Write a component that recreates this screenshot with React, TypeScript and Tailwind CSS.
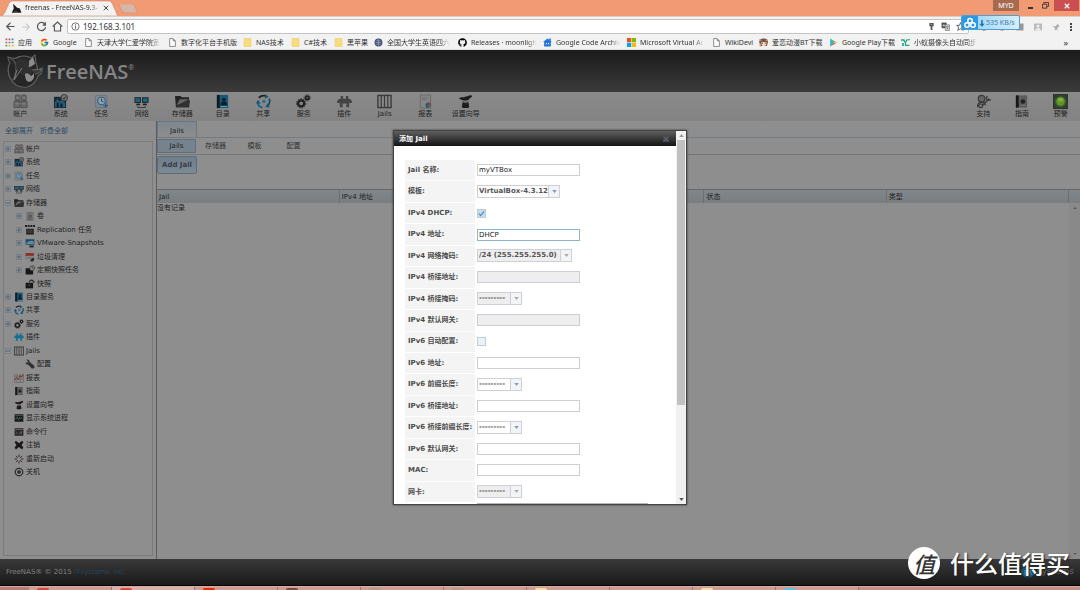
import React from "react";
import { FcGoogle } from "react-icons/fc";
import { FaGithub } from "react-icons/fa";

type IconName =
  | "users" | "system" | "tasks" | "network" | "storage" | "directory" | "sharing" | "services"
  | "plugins" | "jails" | "reports" | "wizard" | "support" | "guide" | "alert" | "volume"
  | "replication" | "vmware" | "scrub" | "periodic" | "snapshot" | "wrench" | "chart"
  | "process" | "shell" | "logout" | "reboot" | "shutdown";

const shapes: Record<IconName, React.ReactNode> = {
  users: (
    <g fill="#6a6a6a" stroke="#404040" strokeWidth=".7">
      <rect x="2.5" y="1" width="5" height="6" rx="1" />
      <rect x="9" y="1" width="5" height="6" rx="1" />
      <path d="M1 14.500V8.500q0-1 1.500-1h5v7zM8.500 14.500v-7h5q1.500 0 1.500 1v6z" />
      <path d="M2 10.500h12M3 4h4M10 4h3.500" stroke="#8d8d8d" />
    </g>
  ),
  system: (
    <g>
      <rect x="1" y="3" width="13" height="12" fill="#1c2a33" />
      <path d="M2 9l3-4 2 3 3-2 3 4v4H2z" fill="#1f5d7c" />
      <path d="M4 14V9h2v5M8 14v-4h2v4" fill="#0f1417" />
      <circle cx="12" cy="4" r="3.500" fill="#777" stroke="#333" />
      <path d="M10.500 4l1.200 1.500L14 2.500" fill="none" stroke="#222" />
    </g>
  ),
  tasks: (
    <g>
      <rect x="1.500" y="1.500" width="12" height="13" rx="1" fill="#7d868e" stroke="#69747e" />
      <circle cx="8" cy="7.500" r="4" fill="#8fa0ad" stroke="#346484" strokeWidth="1.200" />
      <path d="M8 5V7.500l2 1" fill="none" stroke="#334" />
      <path d="M12.500 10v5M10 12.500h5" stroke="#265f89" strokeWidth="1.300" />
    </g>
  ),
  network: (
    <g>
      <rect x="1" y="4" width="6" height="5" fill="#1b6284" stroke="#222" />
      <rect x="9" y="4" width="6" height="5" fill="#1b6284" stroke="#222" />
      <path d="M2 12h5l-1-2H3zM9 12h5l-1-2h-3z" fill="#222" />
      <path d="M4 13v1.500h8V13" fill="none" stroke="#333" />
    </g>
  ),
  storage: (
    <g>
      <path d="M0 2h6l1 1.500h8V14H1z" fill="#242424" />
      <path d="M3 7h13l-1 7H1z" fill="#303030" />
      <path d="M2 12L15 5.500H5z" fill="#666" />
    </g>
  ),
  directory: (
    <g>
      <rect x="2" y="1" width="12" height="14" fill="#155a75" />
      <rect x="2" y="1" width="3" height="14" fill="#101820" />
      <circle cx="9.500" cy="6" r="2" fill="#0c1c26" />
      <path d="M6 12q0-4 3.500-4T13 12z" fill="#0c1c26" />
      <path d="M6 13.500h7" stroke="#75a0b4" />
    </g>
  ),
  sharing: (
    <g fill="none" strokeWidth="2">
      <path d="M3 4q3-3 7-2" stroke="#222" />
      <path d="M14 5q2 4-2 8" stroke="#174e6c" />
      <path d="M7 14.500Q2 13.500 2 9" stroke="#1c6188" />
      <circle cx="8.500" cy="8" r="2.300" fill="#356882" stroke="#84919a" strokeWidth=".8" />
      <path d="M9.500 0l4 3-4 2zM15 14l-5 0 2-4zM0 10l2-4 3 4z" fill="#1c536f" stroke="none" />
    </g>
  ),
  services: (
    <g fill="none" stroke="#202020">
      <circle cx="5.500" cy="10" r="3.200" strokeWidth="2.500" />
      <circle cx="5.500" cy="10" r="4.900" strokeWidth="1" strokeDasharray="1.500 1.200" />
      <circle cx="12" cy="4" r="1.800" strokeWidth="2" />
      <circle cx="12" cy="4" r="3.300" strokeWidth=".8" strokeDasharray="1 1" />
    </g>
  ),
  plugins: <path d="M4 2h2.500v3h3V2H12v3h1q3 1 3 4.500h-3V14h-3v-4H6v4H3V9.500H0Q0 6 3 5h1z" fill="currentColor" />,
  jails: (
    <g fill="none" stroke="#3a3a3a">
      <rect x="1" y="1.500" width="14" height="13" strokeWidth="1.500" />
      <path d="M4.500 2v12M8 2v12M11.500 2v12" strokeWidth="1.300" />
    </g>
  ),
  reports: (
    <g>
      <rect x="2.500" y="1" width="11" height="14" fill="#858585" stroke="#6c6c6c" />
      <path d="M4.500 4h6M4.500 6h5" stroke="#707070" />
      <circle cx="11" cy="12" r="3" fill="#2d5581" />
      <path d="M11 12V9a3 3 0 0 1 3 3z" fill="#9b3d32" />
      <path d="M11 12h3a3 3 0 0 1-3 3z" fill="#468044" />
    </g>
  ),
  wizard: (
    <g fill="#1d1d1d">
      <path d="M1 4.500q2-1.500 5-1L14 1l1 2-3 2q0 1.500-3 2-6 0-8-2.500z" />
      <path d="M5 8q3 1 6 0l1 6q-4 2-8 0z" />
      <path d="M5 8.500q3 1.500 6 0" stroke="#6e6e6e" fill="none" />
    </g>
  ),
  support: (
    <g fill="none" stroke="#3b3b3b" strokeWidth="1.400">
      <circle cx="6" cy="5" r="3.500" fill="#666" />
      <path d="M2 14q-1-5 4-5 4 0 4 3M7 12l7-7M12 2l-1 3 2 2 3-1" />
      <circle cx="5" cy="12.500" r="2" />
    </g>
  ),
  guide: (
    <g>
      <rect x="2" y="1.500" width="12" height="13" fill="#5c5c5c" />
      <rect x="2" y="1.500" width="3" height="13" fill="#161616" />
      <circle cx="9.500" cy="8" r="2.500" fill="#222" />
      <path d="M7 12h5" stroke="#777" />
    </g>
  ),
  alert: (
    <g>
      <rect x=".5" y=".5" width="15" height="15" fill="#363b34" stroke="#29342a" />
      <circle cx="8" cy="8" r="6" fill="#38602a" />
      <circle cx="8" cy="8" r="4.500" fill="#609524" />
      <ellipse cx="8" cy="6" rx="3" ry="2" fill="#83ac44" />
    </g>
  ),
  volume: (
    <g fill="#7c7c7c" stroke="#666">
      <rect x="3" y="2" width="10" height="13" />
      <path d="M6 6v5M8 3v9M10 6v5M4 13h8" stroke="#3c3c3c" />
    </g>
  ),
  replication: (
    <g fill="#1b1b1b">
      <path d="M0 0h3v3H0zM4.300 0h3v3h-3zM8.700 0h3v3h-3zM13 0h3v3h-3zM2 6h12v9H2z" />
      <path d="M5 7v6M8 7v6M11 7v6" stroke="#777" />
    </g>
  ),
  vmware: (
    <g>
      <rect x="1" y="2" width="14" height="9" fill="#164a70" />
      <path d="M2 8q5-5 12-3v5H2z" fill="#698599" />
      <path d="M7 12h7v3H7z" fill="#252525" />
    </g>
  ),
  scrub: (
    <g>
      <rect x="1" y="2" width="13" height="9" fill="#858585" stroke="#777" />
      <rect x="1" y="2" width="13" height="4" fill="#912520" />
      <path d="M4 9h6" stroke="#666" />
      <path d="M9 12l4-3 2 2-2 4H9z" fill="#262626" />
    </g>
  ),
  periodic: (
    <g>
      <path d="M1 5h7v3h5v7H1z" fill="#181818" />
      <circle cx="11.500" cy="5" r="4" fill="#8e8e8e" stroke="#333" />
      <path d="M11.500 2.500V5h2" fill="none" stroke="#222" />
    </g>
  ),
  snapshot: (
    <g fill="#181818">
      <path d="M1 6h12v9H1z" />
      <path d="M7 5q2-5 6-2l2 3" fill="none" stroke="#222" strokeWidth="2" />
      <circle cx="7" cy="10" r="1.500" fill="#444" />
    </g>
  ),
  wrench: <path d="M2 1l3 3-1 2-3-1q0 4 4 4l6 6q3 1 4-1t-1-4L8 5Q7 0 2 1z" fill="#333" />,
  chart: (
    <g fill="none">
      <path d="M1 1v14h14V1M1 5h14M1 10h14M5 1v14M10 1v14" stroke="#555" strokeWidth=".8" />
      <path d="M1 11l3-4 3 3 3-6 2 3 3-5" stroke="#8e211d" strokeWidth="1.400" />
    </g>
  ),
  process: (
    <g>
      <rect x="1" y="2" width="14" height="12" fill="#181818" />
      <path d="M2 9h2l1-3 2 5 2-4 1 3 2-3 1 2" fill="none" stroke="#507073" />
      <path d="M2 4h12" stroke="#666" />
    </g>
  ),
  shell: (
    <g>
      <rect x="1" y="2" width="14" height="12" fill="#282424" />
      <path d="M3 7l2 2-2 2M7 11h2M10 7v4M12 7v4M2 4h12" fill="none" stroke="#888" />
    </g>
  ),
  logout: <path d="M3 1l5 4 5-4 2 3-3 4 3 4-2 3-5-4-5 4-2-3 3-4-3-4z" fill="#1c1717" />,
  reboot: (
    <path
      d="M8 1v4M8 11v4M1 8h4M11 8h4M3 3l3 3M10 10l3 3M13 3l-3 3M6 10l-3 3"
      stroke="#242424"
      strokeWidth="1.500"
    />
  ),
  shutdown: (
    <g fill="none" stroke="#2c2c2c">
      <circle cx="8" cy="8" r="6" strokeWidth="2" />
      <circle cx="8" cy="8" r="2.500" fill="#333" />
    </g>
  ),
};

function Icon({ name, className }: { name: IconName; className: string }) {
  return (
    <svg viewBox="0 0 16 16" className={className} aria-hidden="true">
      {shapes[name]}
    </svg>
  );
}

const navItems: [IconName, string][] = [
  ["users", "帐户"], ["system", "系统"], ["tasks", "任务"], ["network", "网络"],
  ["storage", "存储器"], ["directory", "目录"], ["sharing", "共享"], ["services", "服务"],
  ["plugins", "插件"], ["jails", "Jails"], ["reports", "报表"], ["wizard", "设置向导"],
];

const navRight: [IconName, string][] = [
  ["support", "支持"], ["guide", "指南"], ["alert", "预警"],
];

interface TreeRow {
  icon: IconName;
  label: string;
  sign?: "+" | "-";
  child?: boolean;
}

const tree: TreeRow[] = [
  { icon: "users", label: "帐户", sign: "+" },
  { icon: "system", label: "系统", sign: "+" },
  { icon: "tasks", label: "任务", sign: "+" },
  { icon: "network", label: "网络", sign: "+" },
  { icon: "storage", label: "存储器", sign: "-" },
  { icon: "volume", label: "卷", sign: "+", child: true },
  { icon: "replication", label: "Replication 任务", sign: "+", child: true },
  { icon: "vmware", label: "VMware-Snapshots", sign: "+", child: true },
  { icon: "scrub", label: "垃圾清理", sign: "+", child: true },
  { icon: "periodic", label: "定期快照任务", sign: "+", child: true },
  { icon: "snapshot", label: "快照", child: true },
  { icon: "directory", label: "目录服务", sign: "+" },
  { icon: "sharing", label: "共享", sign: "+" },
  { icon: "services", label: "服务", sign: "+" },
  { icon: "plugins", label: "插件" },
  { icon: "jails", label: "Jails", sign: "-" },
  { icon: "wrench", label: "配置", child: true },
  { icon: "chart", label: "报表" },
  { icon: "guide", label: "指南" },
  { icon: "wizard", label: "设置向导" },
  { icon: "process", label: "显示系统进程" },
  { icon: "shell", label: "命令行" },
  { icon: "logout", label: "注销" },
  { icon: "reboot", label: "重新启动" },
  { icon: "shutdown", label: "关机" },
];

const marks = {
  apps: (
    <g>
      <path d="M1 1h3v3H1zM6.500 1h3v3h-3zM1 6.500h3v3H1z" fill="#e04a3d" />
      <path d="M12 1h3v3h-3zM6.500 6.500h3v3h-3z" fill="#3c7de0" />
      <path d="M12 6.500h3v3h-3zM1 12h3v3H1z" fill="#35a853" />
      <path d="M6.500 12h3v3h-3zM12 12h3v3h-3z" fill="#f0b72c" />
    </g>
  ),
  page: <path d="M3 1h6l4 4v10H3zM9 1v4h4" fill="#fff" stroke="#666" strokeWidth="1.300" />,
  folder: <path d="M2 1h12v14H2z" fill="#f9dc7c" stroke="#ecc95c" />,
  seal: (
    <g>
      <circle cx="8" cy="8" r="7" fill="#445277" />
      <path d="M4 5h8M3 8h10M4 11h8M8 2v12" stroke="#aab4cf" />
    </g>
  ),
  code: (
    <g>
      <path d="M8 1l8 6h-2v8H2V7H0z" fill="#2077d8" />
      <path d="M5 9h2v2H5zM9 9h2v2H9z" fill="#dcecff" />
      <path d="M11 1h3v4h-3z" fill="#2077d8" />
    </g>
  ),
  ms: (
    <g>
      <path d="M0 0h7.500v7.500H0z" fill="#f25022" />
      <path d="M8.500 0H16v7.500H8.500z" fill="#7fba00" />
      <path d="M0 8.500h7.500V16H0z" fill="#00a4ef" />
      <path d="M8.500 8.500H16V16H8.500z" fill="#ffb900" />
    </g>
  ),
  anime: (
    <g>
      <path d="M0 6Q2 0 8 1q7-1 8 6l-2 7H3z" fill="#7a5546" />
      <path d="M4 7h9v5q-4 4-8 1z" fill="#f6dcc8" />
      <path d="M1 2l3 3M15 3l-3 2" stroke="#c99b82" strokeWidth="2" />
      <circle cx="6" cy="9" r="1" fill="#422" />
      <circle cx="11" cy="9" r="1" fill="#422" />
      <path d="M1 10h3v5H1z" fill="#d88b6d" />
    </g>
  ),
  play: (
    <g>
      <path d="M2 1v14l7-7z" fill="#27b9d6" />
      <path d="M2 1l9 5-2 2z" fill="#39b86a" />
      <path d="M11 6l4 2-4 2-2-2z" fill="#f6c343" />
      <path d="M2 15l9-5-2-2z" fill="#e44d55" />
    </g>
  ),
  ant: <path d="M0 2h6l2 4 2-4h6v2h-4L9 8v4h6v2H7V9L4 5H0zM2 9h3v5H2z" fill="#20a884" />,
};

type Mark = keyof typeof marks | "google" | "github";

interface Bookmark {
  mark: Mark;
  label: string;
  width: string;
  faded?: boolean;
}

const bookmarks: Bookmark[] = [
  { mark: "apps", label: "应用", width: "w-[35px]" },
  { mark: "google", label: "Google", width: "w-[44px]" },
  { mark: "page", label: "天津大学仁爱学院宽", width: "w-[84px]", faded: true },
  { mark: "page", label: "数字化平台手机版", width: "w-[75px]" },
  { mark: "folder", label: "NAS技术", width: "w-12" },
  { mark: "folder", label: "C#技术", width: "w-[43px]" },
  { mark: "folder", label: "黑苹果", width: "w-10" },
  { mark: "seal", label: "全国大学生英语四六", width: "w-[84px]", faded: true },
  { mark: "github", label: "Releases · moonligh", width: "w-[85px]", faded: true },
  { mark: "code", label: "Google Code Archiv", width: "w-[84px]", faded: true },
  { mark: "ms", label: "Microsoft Virtual Ac", width: "w-[85px]", faded: true },
  { mark: "page", label: "WikiDevi", width: "w-[47px]" },
  { mark: "anime", label: "爱恋动漫BT下载", width: "w-[70px]" },
  { mark: "play", label: "Google Play下载", width: "w-[72px]" },
  { mark: "ant", label: "小蚁摄像头自动同步", width: "w-20", faded: true },
];

function BookmarkIcon({ mark }: { mark: Mark }) {
  if (mark === "google") return <FcGoogle className="size-[9px] shrink-0" />;
  if (mark === "github") return <FaGithub className="size-[9px] shrink-0 text-black" />;
  return (
    <svg viewBox="0 0 16 16" className="size-[9px] shrink-0" aria-hidden="true">
      {marks[mark]}
    </svg>
  );
}

const FADE = "[mask-image:linear-gradient(to_right,black_85%,transparent)]";

function Browser() {
  return (
    <div className="relative font-[family-name:'Noto_Sans','Noto_Sans_CJK_SC',sans-serif] text-[7px] text-[#333]">
      <div className="flex h-4 items-start justify-between bg-[#f29a73]">
        <div className="flex items-start">
          <div className="relative h-4 w-[118px]">
            <svg viewBox="0 0 118 16" className="absolute inset-0 h-4 w-[118px]" aria-hidden="true">
              <path d="M1 16q3-1 4-4L9 3q1-2 3-2h97q2 0 3 2l4 9q1 3 2 4z" fill="#f4f3f2" stroke="#c98465" strokeWidth=".6" />
            </svg>
            <div className="relative flex h-4 items-center pl-[11px]">
              <svg viewBox="0 0 16 16" className="size-[11px]" aria-hidden="true">
                <path d="M3 1l6 6 4 1 2 6H1l3-6z" fill="#1c1c1c" />
                <path d="M4 14q3-3 6 0" stroke="#777" fill="none" />
              </svg>
              <span className={`ml-[3px] w-[76px] overflow-hidden whitespace-nowrap ${FADE}`}>freenas - FreeNAS-9.3-</span>
              <button aria-label="Close tab" className="ml-[2px]">
                <svg viewBox="0 0 8 8" className="size-[6px]"><path d="M1 1l6 6M7 1L1 7" stroke="#444" strokeWidth="1.300" /></svg>
              </button>
            </div>
          </div>
          <button aria-label="New tab" className="mt-1">
            <svg viewBox="0 0 20 10" className="h-[10px] w-5"><path d="M1 1q0-1 1-1h12q2 0 3 2l2 6q0 1-1 1H7Q5 9 4 7z" fill="#d9b5a4" stroke="#c88a6d" strokeWidth=".5" /></svg>
          </button>
        </div>
        <div className="flex h-[11px] items-stretch">
          <button className="w-[26px] bg-[#a56a50] leading-[11px] text-white">MYD</button>
          <button aria-label="Minimize" className="flex w-[23px] items-center justify-center pt-1">
            <span className="h-[2px] w-[5px] bg-[#333]" />
          </button>
          <button aria-label="Restore" className="flex w-3 items-center">
            <svg viewBox="0 0 8 8" className="size-[7px]"><path d="M2 2V.5h5.500V5H6M.5 2.500h5V7h-5z" fill="none" stroke="#333" /></svg>
          </button>
          <button aria-label="Close" className="mr-px flex w-[25px] items-center justify-center bg-[#c94f50]">
            <svg viewBox="0 0 8 8" className="size-[6px]"><path d="M1 1l6 6M7 1L1 7" stroke="#fff" strokeWidth="1.500" /></svg>
          </button>
        </div>
      </div>

      <div className="flex h-5 items-center border-t border-[#d8d0cb] bg-[#f2f2f2] pl-[5px]">
        <div className="flex w-[62px] items-center gap-[5px]">
          <button aria-label="Back"><svg viewBox="0 0 16 16" className="size-[11px]"><path d="M14 8H3M8 2.500L2.500 8 8 13.500" fill="none" stroke="#555" strokeWidth="1.700" /></svg></button>
          <button aria-label="Forward"><svg viewBox="0 0 16 16" className="size-[10px]"><path d="M2 8h11M8 2.500L13.500 8 8 13.500" fill="none" stroke="#c8c8c8" strokeWidth="1.700" /></svg></button>
          <button aria-label="Reload"><svg viewBox="0 0 16 16" className="size-[11px]"><path d="M13 4.500A6 6 0 1 0 14 9" fill="none" stroke="#555" strokeWidth="1.800" /><path d="M14.500 1v6H9z" fill="#555" /></svg></button>
          <button aria-label="Home"><svg viewBox="0 0 16 16" className="size-[11px]"><path d="M1 8l7-6.500L15 8M3.500 7v7.500h9V7" fill="none" stroke="#555" strokeWidth="1.600" /></svg></button>
        </div>
        <div className="flex h-[15px] flex-1 items-center rounded-xs border border-[#c4c4c4] bg-white pl-[3px]">
          <svg viewBox="0 0 16 16" className="size-[9px]" aria-hidden="true">
            <circle cx="8" cy="8" r="6.500" fill="none" stroke="#555" strokeWidth="1.400" />
            <path d="M8 7v5M8 4v2" stroke="#555" strokeWidth="1.600" />
          </svg>
          <input aria-label="Address" defaultValue="192.168.3.101" className="ml-[3px] min-w-0 flex-1 text-[8px] leading-3 outline-none" />
          <svg viewBox="0 0 16 16" className="size-[7px]" aria-hidden="true"><path d="M3 0h10v7l-3 1v8H6V8L3 7z" fill="#555" /><path d="M6 3h4" stroke="#fff" /></svg>
          <svg viewBox="0 0 16 16" className="mx-[6px] size-[9px]" aria-hidden="true">
            <path d="M1 1h9v10H1z" fill="#555" /><path d="M7 5h8v10H8z" fill="#ddd" stroke="#555" />
            <path d="M3 6h4M5 4v4" stroke="#fff" /><path d="M9 8h4l-3 5M10 10l3 3" fill="none" stroke="#555" />
          </svg>
          <svg viewBox="0 0 16 16" className="mr-[3px] size-[9px]" aria-hidden="true"><path d="M8 1l2 5h5l-4 3 2 6-5-3-5 3 2-6-4-3h5z" fill="none" stroke="#444" strokeWidth="1.400" /></svg>
        </div>
        <div className="flex w-[111px] items-center justify-end gap-[10px] pr-2">
          <svg viewBox="0 0 16 16" className="size-2" aria-hidden="true"><circle cx="8" cy="8" r="7" fill="#444" /></svg>
          <svg viewBox="0 0 16 16" className="size-2" aria-hidden="true"><circle cx="8" cy="8" r="7" fill="#d8382d" /></svg>
          <svg viewBox="0 0 16 16" className="size-2" aria-hidden="true"><path d="M1 1h14v14H1z" fill="#999" /></svg>
          <svg viewBox="0 0 16 16" className="size-2" aria-hidden="true"><path d="M0 1h16v14H0z" fill="#bbb" /><circle cx="8" cy="6" r="3" fill="#eee" /><path d="M2 15q1-5 6-5t6 5z" fill="#eee" /></svg>
          <svg viewBox="0 0 16 16" className="size-2" aria-hidden="true"><path d="M1 6l6 1 5-6 1 4 3 1-5 3-1 3 2 3-4-2-3 2 1-5z" fill="#aaa" /></svg>
          <button aria-label="Menu"><svg viewBox="0 0 4 16" className="h-2 w-[2px]"><path d="M0 0h4v4H0zM0 6h4v4H0zM0 12h4v4H0z" fill="#444" /></svg></button>
        </div>
      </div>

      <nav className="flex h-[14px] items-center border-b border-[#ddd] bg-[#f2f2f2] pl-[5px]">
        {bookmarks.map(({ mark, label, width, faded }) => (
          <a key={label} href="#" className={`flex shrink-0 items-center gap-1 pr-1 ${width}`}>
            <BookmarkIcon mark={mark} />
            <span className={`leading-[13px] whitespace-nowrap ${faded ? FADE : ""}`}>{label}</span>
          </a>
        ))}
        <button aria-label="More bookmarks" className="mr-3 ml-auto text-[9px] leading-3">»</button>
      </nav>

      {/* download speed widget floating over the toolbar */}
      <div className="absolute top-[15px] right-[60px] flex h-[15px] w-[59px] items-stretch overflow-hidden rounded-xs border border-[#4d9fd2] bg-linear-to-r from-[#8fcff8] to-[#d7eefb]">
        <div className="flex w-4 items-center justify-center bg-[#2b9ae6]">
          <svg viewBox="0 0 16 16" className="size-3" aria-hidden="true">
            <g fill="none" stroke="#fff" strokeWidth="2">
              <circle cx="8" cy="5" r="3" /><circle cx="4" cy="10.500" r="3" /><circle cx="12" cy="10.500" r="3" />
            </g>
          </svg>
        </div>
        <svg viewBox="0 0 8 16" className="ml-px h-3 w-[6px] self-center" aria-hidden="true"><path d="M3 4h2v5h2.500L4 13 .5 9H3z" fill="#1c6db4" /></svg>
        <span className="ml-px text-[7px] leading-[13px] text-[#4480ac]">535 KB/s</span>
      </div>
    </div>
  );
}

function Header() {
  return (
    <header className="flex h-[42px] items-center bg-linear-to-b from-[#1b1b1b] to-[#3b3b3b] pl-[6px]">
      <svg viewBox="0 0 38 36" className="h-9 w-[38px]" aria-hidden="true">
        <circle cx="17" cy="18" r="14.500" fill="#272727" stroke="#666" strokeWidth="1.300" />
        <path d="M2 4q5 2 9 1 7-4 14 0l4-3 1 8q2 4 1 8l5-3q1 5-4 8-3 9-11 11-6 1-11-2-5-4-7-10Q1 14 4 10 2 7 2 4z" fill="#262626" stroke="#5c5c5c" strokeWidth="1.200" />
        <path d="M4 5q7 3 6 12-1 9-5 12" fill="none" stroke="#4d4d4d" strokeWidth="1.500" />
        <path d="M10 8q8-5 13 2 5 5 3 10-4 6-9 2-8-3-7-14z" fill="#303030" />
        <path d="M23 8l4-4 2 7-5 3q-2 0-1-2zM19 21q3-2 6 2 2-1 3-3 1 8-5 9-4-1-4-8z" fill="#8c8c8c" />
        <path d="M16 15l-8 12 3-10" fill="none" stroke="#7a7a7a" />
        <path d="M26 17l9-1q-1 5-6 5" fill="#3c3c3c" stroke="#666" />
      </svg>
      <h1 className="ml-[2px] flex items-start pt-[2px] font-[family-name:'Open_Sans',sans-serif] text-[20px] leading-6 font-semibold text-[#858585]">
        FreeNAS<sup className="top-0 mt-1 text-[7px] leading-[7px]">®</sup>
      </h1>
    </header>
  );
}

function NavButton({ icon, label }: { icon: IconName; label: string }) {
  return (
    <button className="flex flex-col items-center gap-px pt-[2px] whitespace-nowrap">
      <Icon name={icon} className="size-[15px] text-[#444]" />
      <span className="leading-[9px]">{label}</span>
    </button>
  );
}

function Sidebar() {
  return (
    <aside className="flex w-[156px] shrink-0 flex-col px-[3px] pb-[3px]">
      <div className="flex h-5 items-center gap-[7px] pl-[2px] text-[#2d4a66]">
        <a href="#">全部展开</a>
        <a href="#">折叠全部</a>
      </div>
      <div className="flex-1 border border-[#7b7b7b]">
        <ul className="grid h-[337px] auto-rows-fr">
          {tree.map((row, i) => (
            <li key={i} className={`flex items-center ${row.child ? "pl-3" : "pl-px"}`}>
              {row.sign ? (
                <button
                  aria-label={row.sign === "+" ? "展开" : "折叠"}
                  className="flex size-[6px] items-center justify-center border border-[#767e8a] bg-[#949494]"
                >
                  <svg viewBox="0 0 4 4" className="size-1">
                    <path d={row.sign === "+" ? "M0 2h4M2 0v4" : "M0 2h4"} stroke="#56606e" />
                  </svg>
                </button>
              ) : (
                <span className="w-[6px]" />
              )}
              <Icon
                name={row.icon}
                className={`mr-[2px] ml-[3px] size-[10px] ${row.icon === "plugins" ? "text-[#147192]" : "text-[#333]"}`}
              />
              <a href="#" className="leading-3 whitespace-nowrap">{row.label}</a>
            </li>
          ))}
        </ul>
      </div>
    </aside>
  );
}

function Arrow({ up, className }: { up?: boolean; className: string }) {
  return (
    <svg viewBox="0 0 6 4" className={className} aria-hidden="true">
      <path d={up ? "M0 4l3-4 3 4z" : "M0 0l3 4 3-4z"} fill="currentColor" />
    </svg>
  );
}

function JailsPanel() {
  return (
    <main className="flex min-w-0 flex-1 flex-col border-l border-[#5c5c5c]">
      <div className="flex h-[17px] border-b border-[#737b83]">
        <button className="w-10 border-x border-t border-[#6c7681] bg-linear-to-b from-[#7f878f] to-[#8e8e8e] pt-[3px] leading-3">Jails</button>
      </div>
      <div className="flex h-[17px] items-center border-b border-[#777] text-[#333]">
        <button className="h-[14px] w-[39px] border border-[#5f7080] bg-[#76828d] leading-3 text-[#222]">Jails</button>
        <button className="w-[39px] leading-3">存储器</button>
        <button className="w-[39px] leading-3">模板</button>
        <button className="w-[39px] leading-3">配置</button>
      </div>
      <div className="h-[34px] pt-px">
        <button className="h-[18px] w-10 rounded-xs border border-[#5a6d7f] bg-linear-to-b from-[#6f7e8c] to-[#7d8993] leading-4 font-bold whitespace-nowrap text-[#363e46]">Add Jail</button>
      </div>
      <div className="flex flex-1 flex-col border-t border-[#666]">
        <div className="flex h-[13px] bg-linear-to-b from-[#80868a] to-[#787e82]">
          <table className="w-full table-fixed text-left">
            <thead>
              <tr className="h-[13px] leading-3">
                {["Jail", "IPv4 地址", "", "状态", "类型"].map((title, i) => (
                  <th key={i} className="border-r border-[#6b7074] pl-[2px] font-normal">{title}</th>
                ))}
              </tr>
            </thead>
          </table>
          <div className="w-[11px] shrink-0" />
        </div>
        <div className="flex flex-1">
          <p className="flex-1 leading-[10px]">没有记录</p>
          <div className="flex w-[11px] flex-col items-center justify-between bg-[#898989] py-1 text-[#555]">
            <Arrow up className="h-[2px] w-1" />
            <Arrow className="h-[2px] w-1" />
          </div>
        </div>
      </div>
    </main>
  );
}

interface Field {
  id: string;
  label: string;
  kind: "text" | "select" | "check";
  value?: string;
  width?: string;
  disabled?: boolean;
  checked?: boolean;
  focused?: boolean;
}

const DASHES = "---------";

const fields: Field[] = [
  { id: "name", label: "Jail 名称:", kind: "text", value: "myVTBox" },
  { id: "template", label: "模板:", kind: "select", value: "VirtualBox-4.3.12", width: "w-[70px]" },
  { id: "dhcp4", label: "IPv4 DHCP:", kind: "check", checked: true },
  { id: "ip4", label: "IPv4 地址:", kind: "text", value: "DHCP", focused: true },
  { id: "mask4", label: "IPv4 网络掩码:", kind: "select", value: "/24 (255.255.255.0)", width: "w-[82px]", disabled: true },
  { id: "bridge4", label: "IPv4 桥接地址:", kind: "text", disabled: true },
  { id: "bridgemask4", label: "IPv4 桥接掩码:", kind: "select", value: DASHES, width: "w-8", disabled: true },
  { id: "gateway4", label: "IPv4 默认网关:", kind: "text", disabled: true },
  { id: "auto6", label: "IPv6 自动配置:", kind: "check" },
  { id: "ip6", label: "IPv6 地址:", kind: "text" },
  { id: "prefix6", label: "IPv6 前缀长度:", kind: "select", value: DASHES, width: "w-8" },
  { id: "bridge6", label: "IPv6 桥接地址:", kind: "text" },
  { id: "bridgeprefix6", label: "IPv6 桥接前缀长度:", kind: "select", value: DASHES, width: "w-8" },
  { id: "gateway6", label: "IPv6 默认网关:", kind: "text" },
  { id: "mac", label: "MAC:", kind: "text" },
  { id: "nic", label: "网卡:", kind: "select", value: DASHES, width: "w-8", disabled: true },
];

function Control({ field }: { field: Field }) {
  if (field.kind === "check") {
    return (
      <span className="relative flex size-[9px] items-center justify-center">
        <input
          id={field.id}
          type="checkbox"
          defaultChecked={field.checked}
          className="peer size-[9px] appearance-none border border-[#c3cbd4] bg-[#e9f2f9] checked:bg-[#c3deef]"
        />
        <svg viewBox="0 0 8 8" className="pointer-events-none absolute hidden size-[7px] peer-checked:block">
          <path d="M1 4l2 2.500L7 1.500" fill="none" stroke="#4b8ab3" strokeWidth="1.300" />
        </svg>
      </span>
    );
  }
  if (field.kind === "select") {
    return (
      <span className={`flex h-[13px] items-stretch border border-[#cdd0d8] ${field.disabled ? "bg-[#eee]" : "bg-white"}`}>
        <select
          id={field.id}
          disabled={field.disabled}
          className={`appearance-none overflow-hidden pl-px leading-[11px] font-bold text-[#555] opacity-100 ${field.width}`}
        >
          <option>{field.value}</option>
        </select>
        <span className={`flex w-[11px] items-center justify-center border-l border-[#cdd0d8] bg-[#f3f4f6] ${field.disabled ? "text-[#aaa]" : "text-[#7e9dc2]"}`}>
          <Arrow className="h-[3px] w-[5px]" />
        </span>
      </span>
    );
  }
  return (
    <input
      id={field.id}
      type="text"
      defaultValue={field.value}
      disabled={field.disabled}
      className={`h-3 w-[103px] border pl-px leading-[10px] text-[#222] outline-none ${
        field.focused ? "border-[#8fb4d2]" : "border-[#cbced8]"
      } ${field.disabled ? "bg-[#eee]" : "bg-white"}`}
    />
  );
}

function AddJailDialog() {
  return (
    <div className="absolute inset-x-0 top-[130px] flex justify-center">
      <div role="dialog" aria-label="添加 Jail" className="flex h-[375px] w-[294px] border border-[#444] bg-white shadow-[0_0_2px_#333]">
        <div className="flex min-w-0 flex-1 flex-col overflow-hidden">
          <div className="flex h-[15px] shrink-0 items-center justify-between bg-linear-to-b from-[#606060] to-[#151515] pr-[7px] pl-[5px]">
            <h2 className="leading-3 font-bold text-white">添加 Jail</h2>
            <button aria-label="关闭">
              <svg viewBox="0 0 8 8" className="size-[6px]"><path d="M0 0h8v8H0z" fill="#444a50" /><path d="M1 1l6 6M7 1L1 7" stroke="#66707a" /></svg>
            </button>
          </div>
          <form className="px-[11px] pt-[14px] text-[#4c4c4c]">
            <div className="grid h-[342px] auto-rows-fr gap-y-px">
              {fields.map((field) => (
                <div key={field.id} className="flex items-center gap-[2px]">
                  <label htmlFor={field.id} className="flex h-full w-[70px] items-center bg-[#f4f4f4] pl-[3px] font-bold whitespace-nowrap">
                    {field.label}
                  </label>
                  <Control field={field} />
                </div>
              ))}
            </div>
            <textarea aria-label="sysctls" className="mt-px ml-[72px] block h-8 w-[171px] resize-none border border-[#b5b5b5]" />
          </form>
        </div>
        <div className="flex w-[10px] flex-col items-center bg-[#f1f1f1] text-[#555]">
          <div className="flex h-[9px] items-center"><Arrow up className="h-[3px] w-[5px] text-[#999]" /></div>
          <div className="h-[265px] w-2 bg-[#c1c1c1]" />
          <div className="mt-auto flex h-[10px] items-center"><Arrow className="h-[3px] w-[5px]" /></div>
        </div>
      </div>
    </div>
  );
}

function Footer() {
  return (
    <footer className="flex h-[27px] items-center justify-between border-b border-black bg-linear-to-b from-[#3a3a3a] to-[#191919] px-[6px]">
      <p className="text-[#808080]">
        FreeNAS® © 2015 <a href="#" className="text-[#27445e]">iXsystems, Inc.</a>
      </p>
      <div className="flex items-center gap-px text-[9px] text-[#666]">
        <svg viewBox="0 0 16 12" className="h-3 w-4" aria-hidden="true">
          <ellipse cx="8" cy="6" rx="7" ry="5.500" fill="#155777" />
          <path d="M5 4v5M8 3l4 6M12 3L8 9" stroke="#6c8795" />
        </svg>
        <span>systems</span>
      </div>
    </footer>
  );
}

const taskSlots = ["bg-[#d84838]", "bg-[#e04a3b]", "bg-[#ef2500]", "bg-[#7b4b40]", "bg-[#b59b86]", "bg-[#b59b86]", "bg-[#f7dfa0]", "bg-[#cf9c94]", "bg-[#f7dfa0]", "bg-[#5fc0f0]"];

function Taskbar() {
  return (
    <div className="flex h-1 border-t border-[#d8aaa4] bg-[#c38f86]">
      <div className="w-[29px] bg-[#b97a75]" />
      {taskSlots.map((color, i) => (
        <div key={i} className={`w-[83px] border-r border-[#a8736c] pl-2 ${i === 1 ? "bg-[#dbb0aa]" : "bg-[#cf9c94]"}`}>
          <div className={`mt-px h-[2px] w-3 rounded-t-sm ${color}`} />
        </div>
      ))}
    </div>
  );
}

function Watermark() {
  return (
    <div className="absolute right-[10px] bottom-[11px] flex items-center gap-[10px] font-[family-name:'Noto_Sans_CJK_SC',sans-serif] text-white">
      <span className="flex size-8 items-center justify-center rounded-full bg-white text-[22px] leading-8 font-medium text-[#333] italic">值</span>
      <span className="text-[24px] leading-8 font-medium [text-shadow:1px_1px_2px_#222]">什么值得买</span>
    </div>
  );
}

export default function App() {
  return (
    <div className="relative flex min-h-screen flex-col overflow-hidden bg-[#8e8e8e] font-[family-name:'DejaVu_Sans','Noto_Sans_CJK_SC',sans-serif] text-[7px] text-[#222]">
      <Browser />
      <Header />
      <nav className="flex h-[29px] items-stretch justify-between bg-linear-to-b from-[#8a8a8a] to-[#838383]">
        <div className="grid w-[486px] grid-cols-12">
          {navItems.map(([icon, label]) => <NavButton key={label} icon={icon} label={label} />)}
        </div>
        <div className="grid w-[116px] grid-cols-3">
          {navRight.map(([icon, label]) => <NavButton key={label} icon={icon} label={label} />)}
        </div>
      </nav>
      <div className="flex flex-1">
        <Sidebar />
        <JailsPanel />
      </div>
      <Footer />
      <Taskbar />
      <AddJailDialog />
      <Watermark />
    </div>
  );
}
